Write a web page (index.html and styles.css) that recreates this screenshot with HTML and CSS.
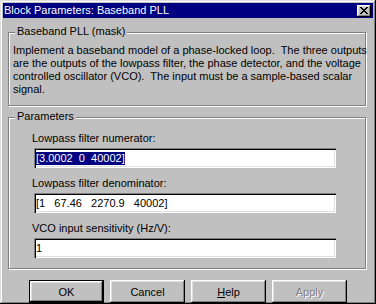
FILE: index.html
```html
<!DOCTYPE html>
<html>
<head>
<meta charset="utf-8">
<title>Block Parameters: Baseband PLL</title>
<link rel="stylesheet" href="styles.css">
</head>
<body>
<div class="window">
  <div class="titlebar">
    <span class="title">Block Parameters: Baseband PLL</span>
    <span class="close"><svg width="8" height="7" viewBox="0 0 8 7" shape-rendering="crispEdges"><path d="M0 0h2v1H0zM6 0h2v1H6zM1 1h2v1H1zM5 1h2v1H5zM2 2h4v1H2zM3 3h2v1H3zM2 4h4v1H2zM1 5h2v1H1zM5 5h2v1H5zM0 6h2v1H0zM6 6h2v1H6z" fill="#000"/></svg></span>
  </div>
  <div class="content">
    <div class="group g1">
      <div class="legend">Baseband PLL (mask)</div>
      <div class="desc">Implement a baseband model of a phase-locked loop.  The three outputs
are the outputs of the lowpass filter, the phase detector, and the voltage
controlled oscillator (VCO).  The input must be a sample-based scalar
signal.</div>
    </div>
    <div class="group g2">
      <div class="legend">Parameters</div>
      <div class="field">
        <div class="label">Lowpass filter numerator:</div>
        <div class="input"><span class="sel">[3.0002  0  40002]</span></div>
      </div>
      <div class="field">
        <div class="label">Lowpass filter denominator:</div>
        <div class="input"><span class="val">[1   67.46   2270.9   40002]</span></div>
      </div>
      <div class="field">
        <div class="label">VCO input sensitivity (Hz/V):</div>
        <div class="input"><span class="val">1</span></div>
      </div>
    </div>
    <div class="buttons">
      <div class="btn default">OK</div>
      <div class="btn">Cancel</div>
      <div class="btn"><span class="u">H</span>elp</div>
      <div class="btn disabled">Apply</div>
    </div>
  </div>
</div>
</body>
</html>
```
FILE: styles.css
```css
html, body {
  margin: 0;
  padding: 0;
}
body {
  width: 376px;
  height: 304px;
  overflow: hidden;
  background: #c0c0c0;
  font-family: "Liberation Sans", Arial, sans-serif;
  font-size: 11px;
  color: #000;
}
.window {
  box-sizing: border-box;
  width: 376px;
  height: 304px;
  padding: 3px;
  background: #c0c0c0;
  box-shadow: inset -1px -1px #000, inset 1px 1px #dfdfdf, inset -2px -2px #808080, inset 2px 2px #fff;
  display: flex;
  flex-direction: column;
}
.titlebar {
  height: 15px;
  background: #000080;
  color: #fff;
  display: flex;
  align-items: flex-start;
  justify-content: space-between;
  padding: 0 2px 0 1px;
}
.title {
  line-height: 15px;
}
.close {
  box-sizing: border-box;
  width: 14px;
  height: 12px;
  margin-top: 2px;
  background: #c0c0c0;
  box-shadow: inset -1px -1px #000, inset 1px 1px #fff, inset -2px -2px #808080, inset 2px 2px #dfdfdf;
  display: flex;
  align-items: center;
  justify-content: center;
  padding-bottom: 1px;
}
.close svg {
  display: block;
}
.content {
  display: flex;
  flex-direction: column;
  padding-top: 14px;
}
.group {
  box-sizing: border-box;
  width: 358px;
  margin-left: 5px;
  border: 1px solid #808080;
  box-shadow: inset 1px 1px #fff, 1px 1px #fff;
  display: flex;
  flex-direction: column;
  align-items: flex-start;
}
.legend {
  line-height: 13px;
  margin-top: -8px;
  margin-left: 6px;
  padding: 0 2px;
  background: #c0c0c0;
}
.g1 {
  padding-bottom: 9px;
}
.desc {
  white-space: pre;
  line-height: 13px;
  margin-top: 6px;
  padding-left: 4px;
}
.g2 {
  margin-top: 11px;
  padding-bottom: 10px;
}
.field {
  display: flex;
  flex-direction: column;
  align-items: flex-start;
  margin-top: 9px;
  padding-left: 23px;
}
.field:first-of-type {
  margin-top: 4px;
}
.label {
  line-height: 13px;
}
.input {
  box-sizing: border-box;
  width: 302px;
  height: 20px;
  margin-top: 3px;
  margin-left: 2px;
  padding-left: 2px;
  background: #fff;
  box-shadow: inset 1px 1px #808080, inset 2px 2px #000, inset -1px -1px #fff, inset -2px -2px #dfdfdf;
  display: flex;
  align-items: center;
  white-space: pre;
}
.sel {
  line-height: 13px;
  background: #000080;
  color: #fff;
}
.val {
  line-height: 13px;
}
.buttons {
  display: flex;
  gap: 6px;
  margin-top: 11px;
  padding-left: 26px;
}
.btn {
  box-sizing: border-box;
  width: 75px;
  height: 23px;
  display: flex;
  align-items: center;
  justify-content: center;
  box-shadow: inset -1px -1px #000, inset 1px 1px #fff, inset -2px -2px #808080, inset 2px 2px #dfdfdf;
}
.btn.default {
  border: 1px solid #000;
}
.u {
  text-decoration: underline;
}
.btn.disabled {
  color: #808080;
  text-shadow: 1px 1px 0 #fff;
}
```
